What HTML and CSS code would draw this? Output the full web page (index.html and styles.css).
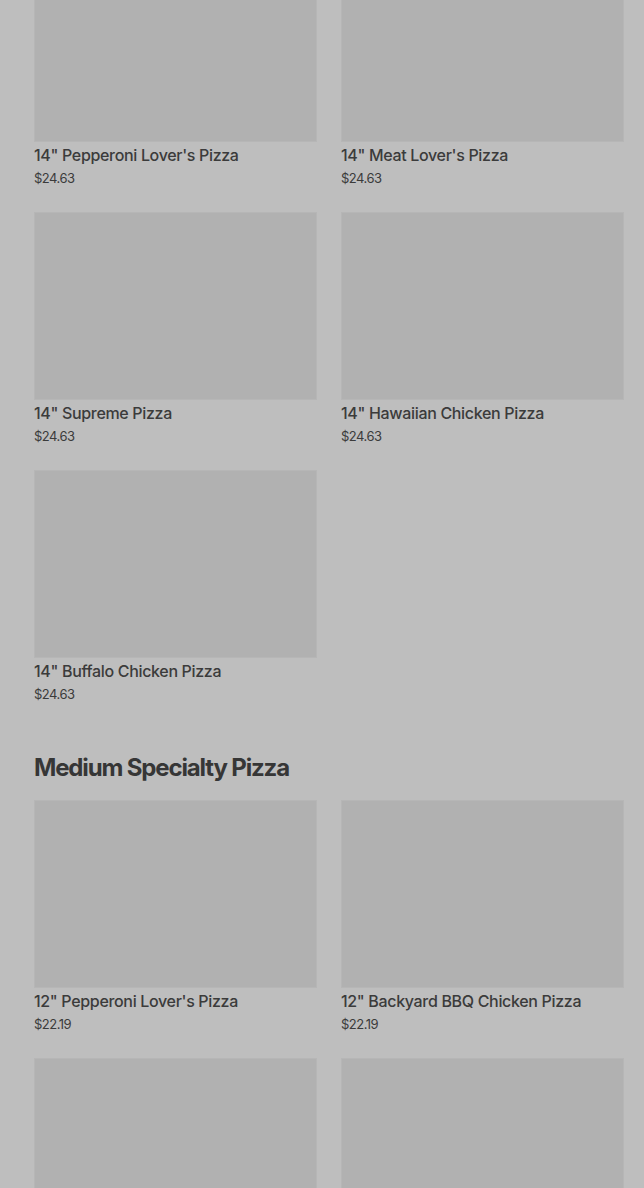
FILE: index.html
```html
<!DOCTYPE html>
<html lang="en">
<head>
<meta charset="utf-8">
<link rel="stylesheet" href="styles.css">
</head>
<body>
<main class="menu">
  <section class="section first">
    <div class="grid">
      <div class="card"><div class="img"></div><div class="name">14" Pepperoni Lover's Pizza</div><div class="price">$24.63</div></div>
      <div class="card"><div class="img"></div><div class="name">14" Meat Lover's Pizza</div><div class="price">$24.63</div></div>
      <div class="card"><div class="img"></div><div class="name">14" Supreme Pizza</div><div class="price">$24.63</div></div>
      <div class="card"><div class="img"></div><div class="name">14" Hawaiian Chicken Pizza</div><div class="price">$24.63</div></div>
      <div class="card"><div class="img"></div><div class="name">14" Buffalo Chicken Pizza</div><div class="price">$24.63</div></div>
    </div>
  </section>
  <section class="section">
    <h2 class="title">Medium Specialty Pizza</h2>
    <div class="grid">
      <div class="card"><div class="img"></div><div class="name">12" Pepperoni Lover's Pizza</div><div class="price">$22.19</div></div>
      <div class="card"><div class="img"></div><div class="name">12" Backyard BBQ Chicken Pizza</div><div class="price">$22.19</div></div>
      <div class="card"><div class="img"></div></div>
      <div class="card"><div class="img"></div></div>
    </div>
  </section>
</main>
</body>
</html>
```
FILE: styles.css
```css
html, body {
  margin: 0;
  padding: 0;
  background: #bebebe;
  overflow: hidden;
}
body {
  font-family: Inter, "Noto Sans", sans-serif;
  color: #3b3b3b;
}
.menu {
  padding: 0 20px 0 34px;
  margin-top: -46px;
}
.section.first {
  padding-bottom: 48px;
}
.title {
  margin: 0 0 16px;
  font-size: 24px;
  line-height: 32px;
  font-weight: 700;
  letter-spacing: -1.15px;
  color: #363636;
}
.grid {
  display: grid;
  grid-template-columns: 1fr 1fr;
  column-gap: 24px;
  row-gap: 24px;
}
.img {
  height: 188px;
  background: #b1b1b1;
  box-shadow: inset 0 0 0 1px #b6b6b6;
}
.name {
  margin-top: 3px;
  font-size: 16px;
  line-height: 20px;
  font-weight: 500;
  letter-spacing: -0.33px;
  white-space: nowrap;
}
.price {
  margin-top: 4px;
  font-size: 13px;
  line-height: 19px;
  font-weight: 400;
  letter-spacing: -0.5px;
}
```
